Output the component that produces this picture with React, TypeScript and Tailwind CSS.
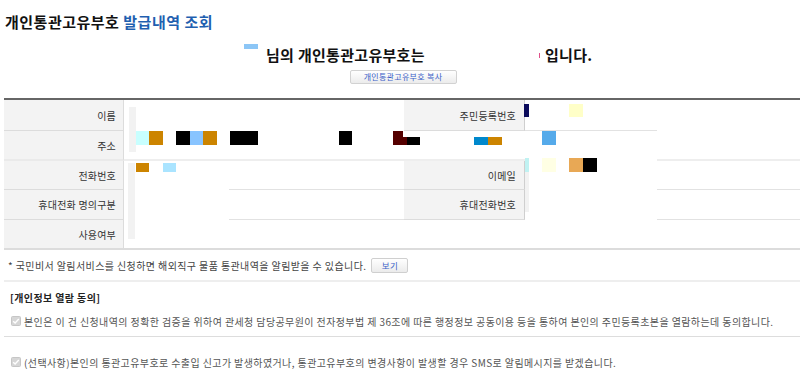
import React from "react";

type B = [number, number, number, number, string];

const blocks: B[] = [
  [244, 44, 14, 5, "#8cc6f6"],
  [539, 53, 1, 5, "#e0508a"],
  // strips
  [129, 107, 7, 45, "#f2f2f2"],
  [128, 163, 7, 76, "#f2f2f2"],
  [525, 160, 4, 52, "#f2f2f2"],
  // row 이름
  [524, 104, 5, 13, "#0c0c5c"],
  [569, 104, 14, 13, "#ffffc8"],
  // row 주소
  [136, 131, 13, 14, "#c8ffff"],
  [149, 131, 14, 14, "#cc8400"],
  [176, 131, 14, 14, "#000000"],
  [190, 131, 13, 14, "#88c4ff"],
  [203, 131, 14, 14, "#cc8400"],
  [230, 131, 28, 14, "#000000"],
  [339, 131, 13, 14, "#000000"],
  [393, 131, 10, 14, "#550000"],
  [403, 137, 4, 8, "#550000"],
  [407, 137, 13, 8, "#000000"],
  [474, 137, 14, 8, "#0088cc"],
  [488, 137, 14, 8, "#cc8400"],
  [542, 131, 14, 14, "#55aaea"],
  // row 전화번호
  [136, 163, 13, 9, "#cc8400"],
  [163, 163, 13, 9, "#aae4ff"],
  [525, 158, 4, 14, "#c0f2f2"],
  [542, 158, 14, 14, "#ffffe4"],
  [569, 158, 14, 14, "#e8a855"],
  [583, 158, 14, 14, "#000000"],
];

function Label({ children, className = "" }: { children: React.ReactNode; className?: string }) {
  return (
    <div
      className={`w-[120px] shrink-0 bg-[#f3f3f3] border-r border-[#dcdcdc] flex items-center justify-end pr-[7px] text-[10px] tracking-[0.2px] text-[#333] ${className}`}
    >
      {children}
    </div>
  );
}

function RLabel({ children, className = "" }: { children: React.ReactNode; className?: string }) {
  return (
    <div
      className={`w-[121px] shrink-0 bg-[#f3f3f3] border-r border-[#cfcfcf] flex items-center justify-end pr-[8px] text-[10px] tracking-[0.2px] text-[#333] ${className}`}
    >
      {children}
    </div>
  );
}

function Check() {
  return (
    <svg width="10" height="10" viewBox="0 0 10 10" className="shrink-0">
      <rect x="0.5" y="0.5" width="9" height="9" rx="1" fill="#d6d6d6" stroke="#c6c6c6" />
      <path d="M2.2 5.2 L4.1 7 L7.8 3" fill="none" stroke="#ffffff" strokeWidth="1.4" />
    </svg>
  );
}

export default function App() {
  return (
    <div className="relative w-[800px] h-[374px] overflow-hidden bg-white font-['Noto_Sans_CJK_KR','Noto_Sans',sans-serif] text-[#333]">
      {/* Title */}
      <div className="pt-[12px] pl-[5px] h-[32px] leading-[20px] text-[15px] tracking-[0.5px] font-bold text-[#111]">
        개인통관고유부호 <span className="text-[#1f5fb0]">발급내역 조회</span>
      </div>

      {/* Sentence */}
      <div className="mt-[14px] h-[18px] flex items-center pl-[266px] text-[15px] font-semibold tracking-[0.3px] leading-[18px] text-[#111]">
        <span className="w-[279px] shrink-0">님의 개인통관고유부호는</span>
        <span>입니다.</span>
      </div>

      {/* Copy button */}
      <div className="mt-[6px] flex justify-center pl-[6px]">
        <button className="w-[107px] h-[14px] border border-[#d2d2d2] rounded-[2px] bg-gradient-to-b from-[#ffffff] to-[#ececec] text-[8px] leading-[12px] tracking-[0.3px] text-[#3a5fc8]">
          개인통관고유부호 복사
        </button>
      </div>

      {/* Table */}
      <div className="ml-[4px] mt-[14px] w-[796px] border-t-2 border-[#666]">
        {/* 이름 */}
        <div className="flex h-[31px]">
          <Label className="border-b">이름</Label>
          <div className="w-[280px] shrink-0" />
          <RLabel className="border-b border-b-[#dcdcdc]">주민등록번호</RLabel>
          <div className="w-[132px] shrink-0 border-b border-[#e2e2e2]" />
          <div className="flex-1" />
        </div>
        {/* 주소 */}
        <div className="flex h-[30px]">
          <Label className="border-b-2 border-b-[#eaeaea]">주소</Label>
          <div className="w-[401px] shrink-0 border-b-2 border-[#eeeeee]" />
          <div className="w-[132px] shrink-0" />
          <div className="flex-1 border-b-2 border-[#eeeeee]" />
        </div>
        {/* 전화번호 / 이메일 */}
        <div className="flex h-[29px]">
          <Label className="border-b">전화번호</Label>
          <div className="w-[105px] shrink-0" />
          <div className="w-[175px] shrink-0 border-b border-[#e2e2e2]" />
          <RLabel className="border-b border-b-[#dcdcdc]">이메일</RLabel>
          <div className="w-[132px] shrink-0" />
          <div className="flex-1 border-b border-[#e2e2e2]" />
        </div>
        {/* 휴대전화 명의구분 / 휴대전화번호 */}
        <div className="flex h-[30px]">
          <Label className="border-b">휴대전화 명의구분</Label>
          <div className="w-[105px] shrink-0" />
          <div className="w-[175px] shrink-0 border-b border-[#e2e2e2]" />
          <RLabel className="border-b border-b-[#dcdcdc]">휴대전화번호</RLabel>
          <div className="w-[132px] shrink-0" />
          <div className="flex-1 border-b border-[#e2e2e2]" />
        </div>
        {/* 사용여부 */}
        <div className="flex h-[30px] border-b-2 border-[#dcdcdc]">
          <Label>사용여부</Label>
          <div className="flex-1" />
        </div>
      </div>

      {/* Notice */}
      <div className="flex items-center h-[30px] pl-[8px] text-[10px] tracking-[0.4px] text-[#444]">
        <span>* 국민비서 알림서비스를 신청하면 해외직구 물품 통관내역을 알림받을 수 있습니다.</span>
        <button className="ml-[5px] w-[37px] h-[15px] border border-[#cfcfcf] rounded-[2px] bg-gradient-to-b from-[#ffffff] to-[#ebebeb] text-[8.5px] leading-[13px] text-[#3a5fc8]">
          보기
        </button>
      </div>
      <div className="ml-[4px] border-t-2 border-[#eeeeee]" />

      {/* Consent */}
      <div className="h-[30px] flex items-center pl-[10px] text-[10px] font-bold tracking-[0.4px] text-[#222]">
        [개인정보 열람 동의]
      </div>
      <div className="h-[18px] flex items-center gap-[3px] pl-[11px] text-[10px] tracking-[0.4px] text-[#555]">
        <Check />
        <span>
          본인은 이 건 신청내역의 정확한 검증을 위하여 관세청 담당공무원이 전자정부법 제 36조에 따른 행정정보 공동이용 등을 통하여 본인의 주민등록초본을 열람하는데 동의합니다.
        </span>
      </div>
      <div className="h-[6px]" />
      <div className="ml-[4px] border-t border-[#dddddd]" />
      <div className="h-[16px]" />
      <div className="h-[18px] flex items-center gap-[3px] pl-[11px] text-[10px] tracking-[0.4px] text-[#555]">
        <Check />
        <span>
          (선택사항)본인의 통관고유부호로 수출입 신고가 발생하였거나, 통관고유부호의 변경사항이 발생할 경우 SMS로 알림메시지를 받겠습니다.
        </span>
      </div>

      {/* masking blocks overlay */}
      {blocks.map(([x, y, w, h, c], i) => (
        <div
          key={i}
          className="absolute"
          style={{ left: x, top: y, width: w, height: h, background: c }}
        />
      ))}
    </div>
  );
}
